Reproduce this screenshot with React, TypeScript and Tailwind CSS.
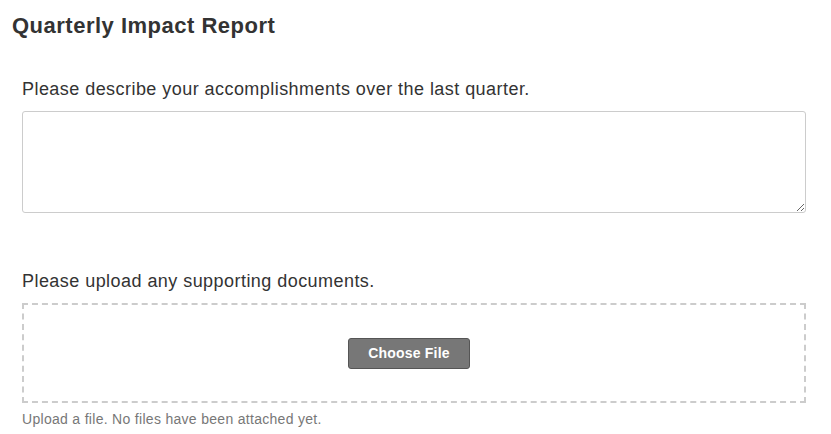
export default function App() {
  return (
    <div className="w-[831px] h-[434px] bg-white text-[#333] overflow-hidden" style={{ fontFamily: '"Liberation Sans", Arial, sans-serif' }}>
      <h1 className="pl-3 pt-[13px] text-[22px] font-bold leading-[26px] tracking-[0.5px]">Quarterly Impact Report</h1>

      <div className="px-[22px] pr-[25px]">
        <label className="block mt-[39px] text-[18px] leading-[22px] tracking-[0.45px]">
          Please describe your accomplishments over the last quarter.
        </label>
        <textarea className="block mt-[11px] w-full h-[102px] border border-[#ccc] rounded-[3px] bg-white outline-none resize-y" />

        <label className="block mt-[57px] text-[18px] leading-[22px] tracking-[0.45px]">
          Please upload any supporting documents.
        </label>
        <div className="mt-[11px] h-[100px] border-2 border-dashed border-[#ccc] flex items-center justify-center">
          <button className="mr-[10px] w-[122px] h-[31px] bg-[#777] border border-[#555] rounded-[3px] text-white text-[14px] font-bold tracking-[0.2px]">
            Choose File
          </button>
        </div>
        <p className="mt-[7px] text-[14px] leading-[18px] tracking-[0.3px] text-[#777]">
          Upload a file. No files have been attached yet.
        </p>
      </div>
    </div>
  );
}
